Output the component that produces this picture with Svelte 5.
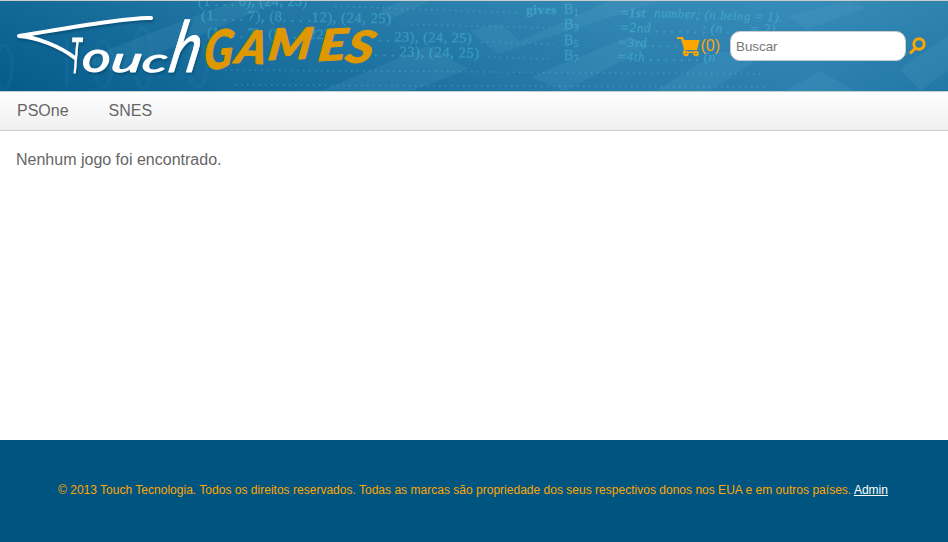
<script>
  const platforms = ['PSOne', 'SNES'];
  const formulas = [
    { x: 198, y: 5, text: '(1 . . . 6), (24, 23)', rotate: 0, size: 14 },
    { x: 201, y: 19, text: '(1. . . . 7), (8. . . .12), (24, 25)', rotate: 1, size: 14.7 },
    { x: 207, y: 36, text: '(1 . . . 7), (8 . . . 22)', rotate: 1, size: 14 },
    { x: 378, y: 40, text: '. . 23), (24, 25)', rotate: 1, size: 14.3 },
    { x: 374, y: 55, text: '. . . 23), (24, 25)', rotate: 1, size: 14.8 },
    { x: 526, y: 13, text: 'gives', rotate: 0, size: 13.5, bold: true },
    { x: 621, y: 16, text: '=1st', rotate: 1, size: 13, bold: true, italic: true },
    { x: 654, y: 16, text: 'number; (n being = 1).', rotate: 2, size: 12.8, italic: true },
    { x: 620, y: 31, text: '=2nd . . . . . . ; (n . . . = 2)', rotate: 0.5, size: 13.5, italic: true },
    { x: 618, y: 46, text: '=3rd . . . . . .', rotate: 0, size: 13.5, italic: true },
    { x: 617, y: 60, text: '=4th . . . . . . . (n', rotate: 0, size: 13.5, italic: true }
  ];
  const indices = [
    { y: 14, n: 1 }, { y: 29, n: 3 }, { y: 45, n: 5 }, { y: 60, n: 7 }
  ];
  const leaders = [
    [335, 5, 520, 12], [405, 23, 554, 27], [481, 41, 554, 43],
    [488, 56, 554, 58], [225, 69, 765, 73], [235, 84, 765, 86]
  ];
  const games = [
    { c: 'G', x: 203, y: 70, size: 53, width: 29, turn: -5 },
    { c: 'A', x: 234, y: 63, size: 46, width: 30, turn: 2 },
    { c: 'M', x: 267, y: 60, size: 43, width: 43, turn: -2 },
    { c: 'E', x: 317, y: 61, size: 43, width: 28, turn: -3 },
    { c: 'S', x: 344, y: 62, size: 45, width: 27, turn: 3 }
  ];
</script>

<div class="page">
  <header>
    <svg class="backdrop" viewBox="0 0 948 90" preserveAspectRatio="none" aria-hidden="true">
      <defs>
        <linearGradient id="sea" x2="1" y2="0">
          <stop offset="0" stop-color="#055d8b" />
          <stop offset=".22" stop-color="#156b9a" />
          <stop offset=".45" stop-color="#2277a5" />
          <stop offset=".66" stop-color="#2d82b0" />
          <stop offset=".85" stop-color="#3186b4" />
          <stop offset="1" stop-color="#277da9" />
        </linearGradient>
        <linearGradient id="shade" x2="0" y2="1">
          <stop offset="0" stop-color="#5caace" stop-opacity=".16" />
          <stop offset="1" stop-color="#005487" stop-opacity=".13" />
        </linearGradient>
      </defs>
      <rect width="948" height="90" fill="url(#sea)" />
      <rect width="948" height="90" fill="url(#shade)" />
      <g fill="#65b0d4" opacity=".14">
        <path d="M80 59 235 0H280L115 71ZM320 90 428 45 468 68 412 90ZM470 30 500 22 520 40 610 0H660L498 53ZM531 76 630 35 650 45 565 90ZM655 90 720 50 760 57 710 90ZM788 15 850 0 866 7 806 28ZM785 90 820 70 855 90ZM900 68 948 34V70L920 90ZM380 10 400 0H430L390 18Z" />
      </g>
      <g class="rings">
        <ellipse cx="4" cy="66" rx="8" ry="22" /><path d="M67 38V86" />
        <ellipse cx="103" cy="63" rx="9" ry="23" />
        <ellipse cx="143" cy="57" rx="9" ry="30" />
        <ellipse cx="198" cy="63" rx="9" ry="23" />
      </g>
      <g class="formula">
        {#each formulas as f}
          <text x={f.x} y={f.y} font-size={f.size}
            font-weight={f.bold ? 700 : 400}
            font-style={f.italic ? 'italic' : 'normal'}
            transform={`rotate(${f.rotate} ${f.x} ${f.y})`}>{f.text}</text>
        {/each}
        {#each indices as row}
          <text x="564" y={row.y - 1} font-size="14">B<tspan dy="2" font-size="10">{row.n}</tspan></text>
        {/each}
      </g>
      <g class="leaders">
        {#each leaders as [x1, y1, x2, y2]}<line {x1} {y1} {x2} {y2} />{/each}
      </g>
    </svg>

    <a class="logo" href="#home" aria-label="Touch Games">
      <svg width="385" height="90" viewBox="0 1 385 90">
        <g class="touch">
          <path d="M151 18C138 17 100 22 19 36C37 37 61 47 75 58" />
          <text transform="translate(70 73) skewX(-2)" font-size="49" textLength="11" lengthAdjust="spacingAndGlyphs">T</text>
          <text x="82" y="72" font-size="42" textLength="29" lengthAdjust="spacingAndGlyphs">o</text>
          <text transform="translate(110 72) skewX(-8)" font-size="35" textLength="31" lengthAdjust="spacingAndGlyphs">u</text>
          <text transform="translate(141 72) skewX(-8)" font-size="33" textLength="25" lengthAdjust="spacingAndGlyphs">c</text>
          <text transform="translate(167 72) skewX(-12)" font-size="71" textLength="30" lengthAdjust="spacingAndGlyphs">h</text>
        </g>
        <g class="games">
          {#each games as g}
            <text font-size={g.size} textLength={g.width} lengthAdjust="spacingAndGlyphs"
              transform={`translate(${g.x} ${g.y}) rotate(${g.turn}) skewX(-10)`}>{g.c}</text>
          {/each}
        </g>
      </svg>
    </a>

    <div class="tools">
      <a class="cart" href="#cart">
        <svg width="23" height="20" viewBox="0 0 23 20" aria-hidden="true">
          <path fill="#ffa500" d="M0 0H6L7 3H22.500L20 13H8L7.500 14.500H20V16H5.500L7 12 4 2H0Z" />
          <circle cx="9" cy="16.500" r="1.800" /><circle cx="19" cy="16.500" r="1.800" />
        </svg><span>(0)</span>
      </a>
      <input type="text" placeholder="Buscar" aria-label="Buscar" />
      <button aria-label="Pesquisar">
        <svg width="18" height="18" viewBox="0 0 18 18">
          <circle cx="10" cy="7" r="5.200" /><path d="M6.500 11 1 16.500" />
        </svg>
      </button>
    </div>
  </header>

  <nav>{#each platforms as p}<a href={`#${p}`}>{p}</a>{/each}</nav>
  <main>Nenhum jogo foi encontrado.</main>
  <footer>
    <p>© 2013 Touch Tecnologia. Todos os direitos reservados. Todas as marcas são propriedade dos seus respectivos donos nos EUA e em outros países. <a href="#admin">Admin</a></p>
  </footer>
</div>

<style>
  :global(body) { margin: 0; background: #fff; }
  .page {
    height: 542px;
    display: flex;
    flex-direction: column;
    font: 16px/20px "Liberation Sans", Arial, sans-serif;
    color: #666;
    overflow: hidden;
  }
  header {
    position: relative;
    box-sizing: border-box;
    height: 92px;
    flex: none;
    border-top: 1px solid #ccc;
    border-bottom: 1px solid #ccc;
    display: flex;
    justify-content: space-between;
  }
  .backdrop { position: absolute; inset: 0; width: 100%; height: 90px; }
  .formula { font-family: "Liberation Serif", serif; fill: #50c8e0; stroke: #50c8e0; stroke-width: .3; opacity: .4; letter-spacing: .5px; }
  .rings { fill: none; stroke: #58a4c8; stroke-width: 4; opacity: .07; }
  .leaders { stroke: #58c4df; stroke-width: 1.5; stroke-dasharray: 1.5 4.500; opacity: .35; }
  .logo { position: relative; height: 90px; }
  .logo svg { display: block; }
  .touch {
    font-family: Lato, sans-serif;
    font-style: italic;
    fill: #fff;
    stroke: #fff;
    stroke-width: 1;
    stroke-linejoin: round;
    filter: drop-shadow(1px 2px 1px #003f6488);
  }
  .touch path { fill: none; stroke-width: 4; stroke-linecap: round; }
  .games {
    font-family: Lato, sans-serif;
    font-style: italic;
    font-weight: 900;
    fill: #df9800;
    stroke: #df9800;
    stroke-width: 1;
    stroke-linejoin: round;
  }
  .tools { position: relative; display: flex; align-items: center; padding-right: 21px; }
  .cart { display: flex; align-items: center; color: orange; text-decoration: none; margin-right: 10px; }
  .cart svg { margin-top: 2px; }
  .cart circle { fill: #287fac; stroke: orange; stroke-width: 2; }
  input {
    box-sizing: border-box;
    width: 176px;
    height: 30px;
    padding: 0 5px;
    border: 1px solid #ccc;
    border-radius: 10px;
    background: #fff;
    font: 13.333px "Liberation Sans", Arial, sans-serif;
    outline: 0;
  }
  input::placeholder { color: #757575; }
  button { border: 0; padding: 0; margin-left: 3px; width: 18px; height: 18px; background: none; }
  button svg { display: block; fill: none; stroke: orange; stroke-width: 3; }
  nav {
    box-sizing: border-box;
    height: 39px;
    flex: none;
    display: flex;
    gap: 40px;
    align-items: center;
    padding: 0 17px;
    border-bottom: 1px solid #ccc;
    background: linear-gradient(#fff, #f0f0f0);
  }
  nav a { color: #666; text-decoration: none; }
  main { flex: 1; padding: 19px 16px; }
  footer {
    box-sizing: border-box;
    height: 102px;
    flex: none;
    padding-top: 40px;
    background: #005580;
    color: orange;
    text-align: center;
    font-size: 12px;
  }
  footer p { margin: 0; padding-right: 2px; letter-spacing: .015px; }
  footer a { color: #fff; }
</style>
